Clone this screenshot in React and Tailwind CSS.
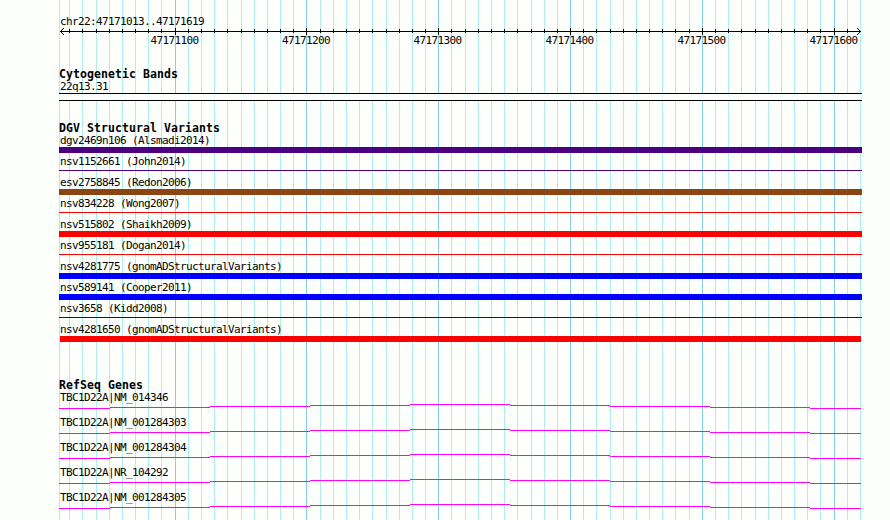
import React from 'react'

const START = 47171013;
const END = 47171619;

const toX = (pos) => 60 + Math.round(((pos - START) * 800) / (END - START + 1));

const ticks = [];
for (let pos = 47171020; pos <= 47171620; pos += 10) {
  ticks.push({ pos, x: toX(pos), major: pos % 100 === 0 });
}

const variants = [
  { name: "dgv2469n106 (Alsmadi2014)", bar: "h-1.5 bg-[#4b0082]" },
  { name: "nsv1152661 (John2014)", bar: "h-px mt-0.5 mb-[3px] bg-[#4b0082]" },
  { name: "esv2758845 (Redon2006)", bar: "h-1.5 bg-[#8b4513]" },
  { name: "nsv834228 (Wong2007)", bar: "h-px mt-0.5 mb-[3px] bg-[#ff0000]" },
  { name: "nsv515802 (Shaikh2009)", bar: "h-1.5 bg-[#ff0000]" },
  { name: "nsv955181 (Dogan2014)", bar: "h-px mt-0.5 mb-[3px] bg-[#ff0000]" },
  { name: "nsv4281775 (gnomADStructuralVariants)", bar: "h-1.5 bg-[#0000ff]" },
  { name: "nsv589141 (Cooper2011)", bar: "h-1.5 bg-[#0000ff]" },
  { name: "nsv3658 (Kidd2008)", bar: "h-px mt-0.5 mb-[3px] bg-[#0000ff]" },
  { name: "nsv4281650 (gnomADStructuralVariants)", bar: "h-1.5 ml-px mr-px bg-[#ff0000]" },
];

const genes = [
  "TBC1D22A|NM_014346",
  "TBC1D22A|NM_001284303",
  "TBC1D22A|NM_001284304",
  "TBC1D22A|NR_104292",
  "TBC1D22A|NM_001284305",
];

const Grid = () => (
  <svg className="absolute left-0 top-0" width="890" height="520" shapeRendering="crispEdges">
    <rect x="59" y="0" width="1" height="520" fill="#afeeee" />
    {ticks.map((t) => (
      <rect key={t.pos} x={t.x} y="0" width="1" height="520" fill={t.major ? "#87ceeb" : "#afeeee"} />
    ))}
  </svg>
)

const Ruler = () => (
  <svg className="-ml-[59px] block" width="890" height="7" shapeRendering="crispEdges">
    <rect x="60" y="3" width="801" height="1" />
    {ticks.filter((t) => t.pos <= END).map((t) => (
      <rect key={t.pos} x={t.x} y={t.major ? 0 : 1} width="1" height={t.major ? 7 : 4} />
    ))}
    <path d="M61 2h1v1h-1zM62 1h1v1h-1zM63 0h1v1h-1zM61 4h1v1h-1zM62 5h1v1h-1zM63 6h1v1h-1z" />
    <path d="M859 2h1v1h-1zM858 1h1v1h-1zM857 0h1v1h-1zM859 4h1v1h-1zM858 5h1v1h-1zM857 6h1v1h-1z" />
  </svg>
)

const Label = ({ children }) => (
  <div className="h-3 pl-px pt-px text-[11px] leading-3 tracking-[-0.622px] whitespace-nowrap">{children}</div>
)

const Title = ({ children }) => (
  <h2 className="h-3 text-[11.5px] font-bold leading-3 tracking-[0.077px] whitespace-nowrap">{children}</h2>
)

// the intron arc is drawn as 1px steps, 100px wide each
const Intron = () => (
  <div className="flex h-[5px] w-[802px]">
    <div className="mt-1 h-px w-[51px] bg-[#ff00ff]"></div>
    <div className="mt-[3px] h-px w-[100px] bg-[#ff00ff]"></div>
    <div className="mt-0.5 h-px w-[100px] bg-[#ff00ff]"></div>
    <div className="mt-px h-px w-[100px] bg-[#ff00ff]"></div>
    <div className="h-px w-[100px] bg-[#ff00ff]"></div>
    <div className="mt-px h-px w-[100px] bg-[#ff00ff]"></div>
    <div className="mt-0.5 h-px w-[100px] bg-[#ff00ff]"></div>
    <div className="mt-[3px] h-px w-[100px] bg-[#ff00ff]"></div>
    <div className="mt-1 h-px w-[51px] bg-[#ff00ff]"></div>
  </div>
)

const App = () => {
  return (
    <div className="relative h-[520px] w-[890px] overflow-hidden bg-[#fdfffc] font-['DejaVu_Sans_Mono',monospace] text-black">
      <Grid />
      <div className="relative ml-[59px] w-[803px] pt-[15px]">
        <Label>chr22:47171013..47171619</Label>
        <div className="mt-px">
          <Ruler />
          <div className="flex h-3 pl-[49.5px] text-[11px] leading-3 tracking-[-0.622px]">
            {ticks.filter((t) => t.major).map((t, i, all) => (
              <div key={t.pos} className="shrink-0 text-center" style={{ width: i === 0 ? 132 : t.x - all[i - 1].x }}>
                {t.pos}
              </div>
            ))}
          </div>
        </div>

        <section className="mt-[21px]">
          <Title>Cytogenetic Bands</Title>
          <Label>22q13.31</Label>
          <div className="mt-px h-2 border-y border-black bg-[#fdfffc]"></div>
        </section>

        <section className="mt-[21px]">
          <Title>DGV Structural Variants</Title>
          {variants.map((v) => (
            <div key={v.name} className="h-[21px]">
              <Label>{v.name}</Label>
              <div className="flex flex-col pt-px">
                <div className={v.bar}></div>
              </div>
            </div>
          ))}
        </section>

        <section className="mt-[35px]">
          <Title>RefSeq Genes</Title>
          {genes.map((g) => (
            <div key={g} className="h-[25px]">
              <Label>{g}</Label>
              <div className="pt-px">
                <Intron />
              </div>
            </div>
          ))}
        </section>
      </div>
    </div>
  )
}

export default App
